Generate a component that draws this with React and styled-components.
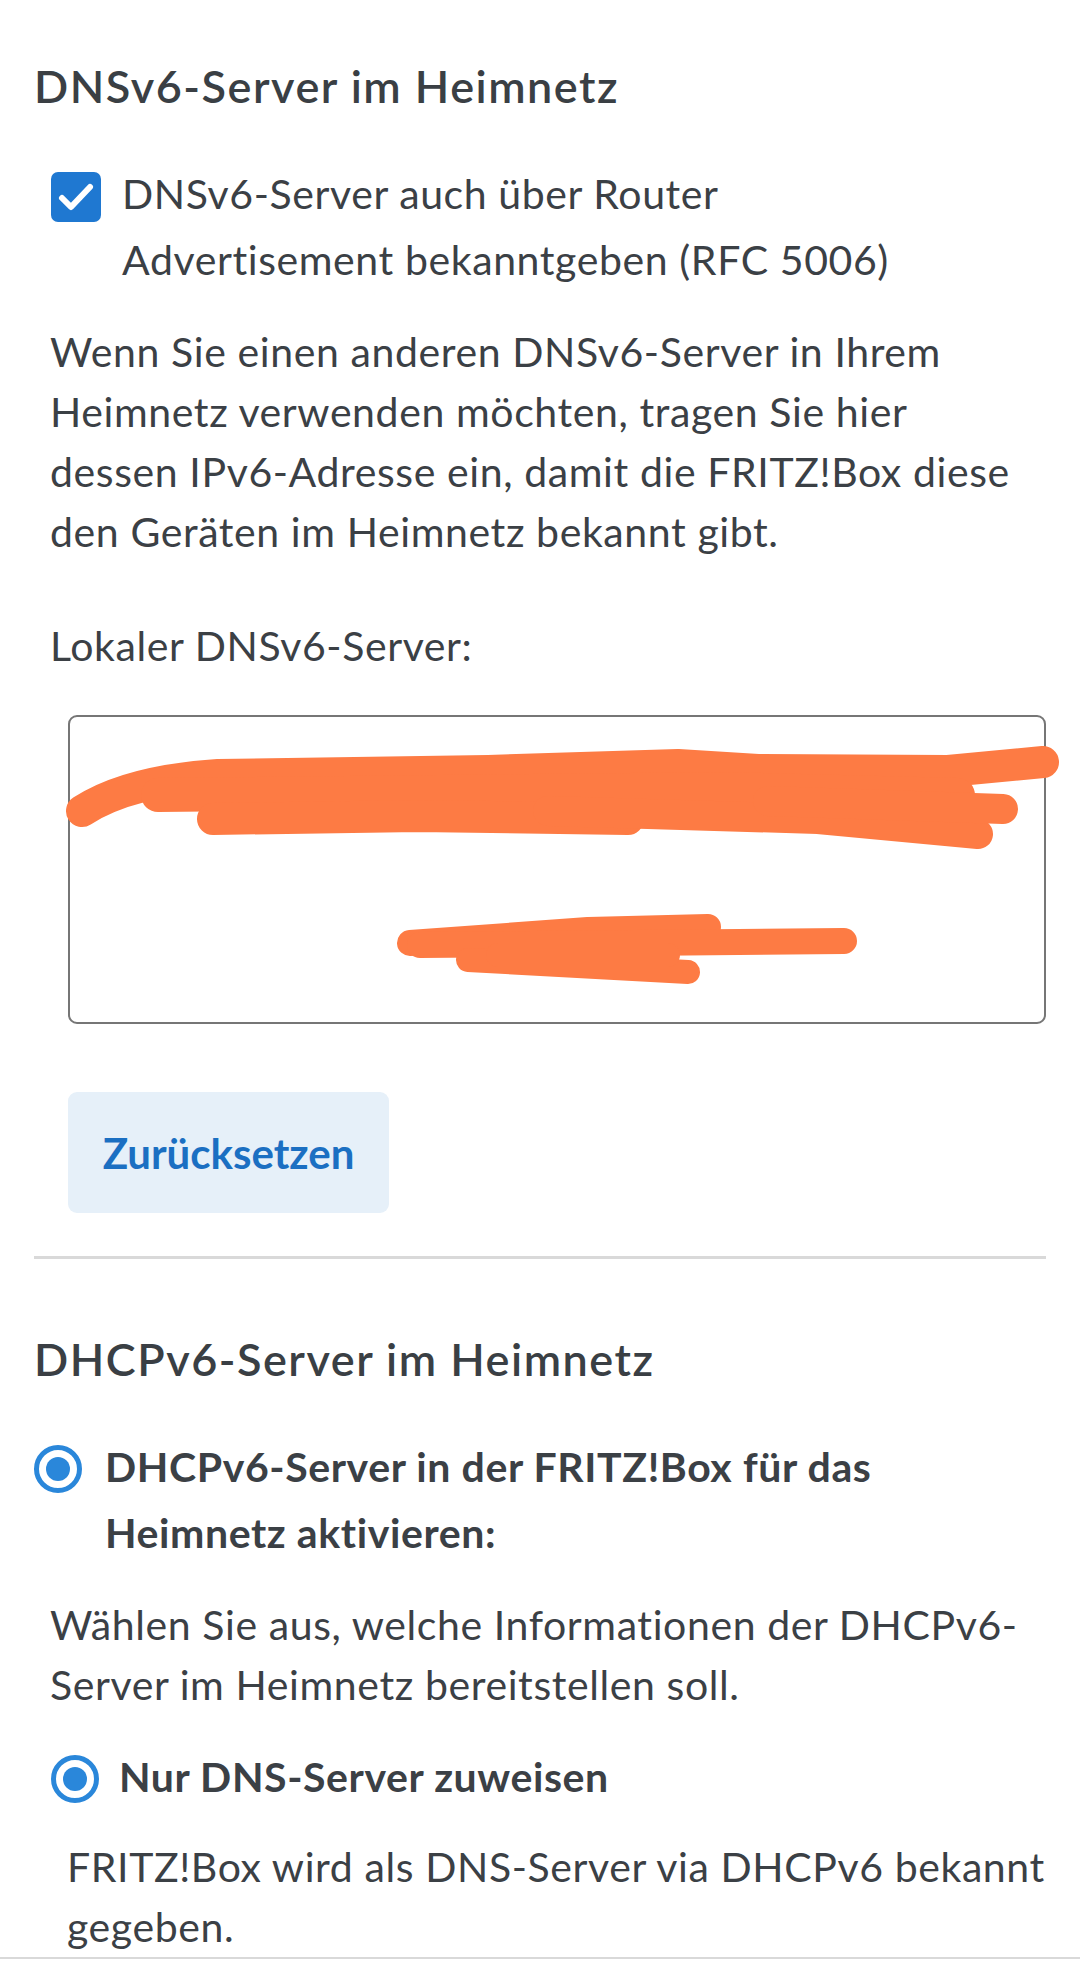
import React from 'react';
import styled, { createGlobalStyle } from 'styled-components';

const GlobalStyle = createGlobalStyle`
    body {
        margin: 0;
        background: #ffffff;
        font-family: Lato, "Noto Sans", sans-serif;
        color: #3b4045;
    }
`;

const App = () => {
    return (
        <>
            <GlobalStyle />
            <Page>
                <SectionTitle>DNSv6-Server im Heimnetz</SectionTitle>

                <CheckRow>
                    <CheckBox>
                        <svg width="50" height="50" viewBox="0 0 50 50">
                            <polyline points="11,26 20,35 39,15" fill="none" stroke="#fff" strokeWidth="6" strokeLinecap="round" strokeLinejoin="round" />
                        </svg>
                    </CheckBox>
                    <CheckText>DNSv6-Server auch über Router Advertisement bekanntgeben (RFC 5006)</CheckText>
                </CheckRow>

                <Para $mt={29}>
                    Wenn Sie einen anderen DNSv6-Server in Ihrem Heimnetz verwenden möchten, tragen Sie hier dessen IPv6-Adresse ein, damit die FRITZ!Box diese den Geräten im Heimnetz bekannt gibt.
                </Para>

                <Para $mt={54}>Lokaler DNSv6-Server:</Para>

                <InputBox>
                    <Scribble width="978" height="309" viewBox="0 0 978 309">
                        <g fill="none" stroke="#fd7b44" strokeLinecap="round" strokeLinejoin="round">
                            <path d="M14 96 Q60 66 150 60 L420 56 L610 50 L690 55 L880 56 L975 47" strokeWidth="32" />
                            <path d="M90 80 L660 74 L890 80" strokeWidth="34" />
                            <path d="M145 104 L350 101 L560 104" strokeWidth="32" />
                            <path d="M480 96 L750 104 L910 119" strokeWidth="30" />
                            <path d="M700 86 L935 94" strokeWidth="30" />
                            <path d="M342 228 L520 215 L640 212" strokeWidth="26" />
                            <path d="M352 230 L776 226" strokeWidth="26" />
                            <path d="M400 245 L620 257" strokeWidth="24" />
                            <path d="M430 240 L600 240" strokeWidth="24" />
                        </g>
                    </Scribble>
                </InputBox>

                <ResetButton>Zurücksetzen</ResetButton>

                <Divider />

                <SectionTitle $mt={70}>DHCPv6-Server im Heimnetz</SectionTitle>

                <RadioRow $mt={45} $indent={0} $gap={23}>
                    <Radio />
                    <RadioText>DHCPv6-Server in der FRITZ!Box für das Heimnetz aktivieren:</RadioText>
                </RadioRow>

                <Para $mt={29}>
                    Wählen Sie aus, welche Informationen der DHCPv6-Server im Heimnetz bereitstellen soll.
                </Para>

                <RadioRow $mt={29} $indent={17} $gap={20}>
                    <Radio />
                    <RadioText>Nur DNS-Server zuweisen</RadioText>
                </RadioRow>

                <Para $mt={27} $indent={33} $right={0}>
                    FRITZ!Box wird als DNS-Server via DHCPv6 bekannt gegeben.
                </Para>

                <BottomRule />
            </Page>
        </>
    );
}

const Page = styled.div`
    width: 1080px;
    box-sizing: border-box;
    padding: 56px 34px 0;
`;

const SectionTitle = styled.h2`
    margin: ${p => p.$mt || 0}px 0 0;
    font-size: 45px;
    line-height: 60px;
    font-weight: 600;
    letter-spacing: 1.5px;
    color: #3a3f44;
`;

const CheckRow = styled.label`
    display: flex;
    align-items: flex-start;
    gap: 21px;
    margin: 45px 0 0 17px;
`;

const CheckBox = styled.span`
    flex: none;
    width: 50px;
    height: 50px;
    margin-top: 11px;
    border-radius: 7px;
    background: #1f78d1;
    display: flex;
    align-items: center;
    justify-content: center;
`;

const CheckText = styled.span`
    font-size: 41px;
    line-height: 66px;
    letter-spacing: 0.6px;
    max-width: 790px;
`;

const Para = styled.p`
    margin: ${p => p.$mt}px ${p => p.$right ?? 18}px 0 ${p => p.$indent ?? 16}px;
    font-size: 41px;
    line-height: 60px;
    letter-spacing: 0.6px;
`;

const InputBox = styled.div`
    position: relative;
    margin: 39px 0 0 34px;
    width: 978px;
    height: 309px;
    box-sizing: border-box;
    border: 2px solid #767676;
    border-radius: 9px;
`;

const Scribble = styled.svg`
    position: absolute;
    left: -2px;
    top: -2px;
    overflow: visible;
`;

const ResetButton = styled.button`
    display: block;
    margin: 68px 0 0 34px;
    width: 321px;
    height: 121px;
    border: none;
    border-radius: 9px;
    background: #e6f0f9;
    color: #1b6fc2;
    font-family: Lato, "Noto Sans", sans-serif;
    font-size: 42px;
    font-weight: 700;
    padding: 0;
`;

const Divider = styled.div`
    margin-top: 43px;
    height: 3px;
    background: #d9d9d9;
`;

const RadioRow = styled.label`
    display: flex;
    align-items: flex-start;
    gap: ${p => p.$gap}px;
    margin: ${p => p.$mt}px 0 0 ${p => p.$indent}px;
`;

const Radio = styled.span`
    flex: none;
    width: 48px;
    height: 48px;
    margin-top: 11px;
    box-sizing: border-box;
    border: 5px solid #2a87da;
    border-radius: 50%;
    display: flex;
    align-items: center;
    justify-content: center;

    &::after {
        content: '';
        width: 24px;
        height: 24px;
        border-radius: 50%;
        background: #2a87da;
    }
`;

const RadioText = styled.span`
    font-size: 41px;
    line-height: 66px;
    font-weight: 700;
    letter-spacing: 0.6px;
    max-width: 900px;
`;

const BottomRule = styled.div`
    margin: 0 -34px;
    height: 2px;
    background: #d9d9d9;
`;

export default App;
